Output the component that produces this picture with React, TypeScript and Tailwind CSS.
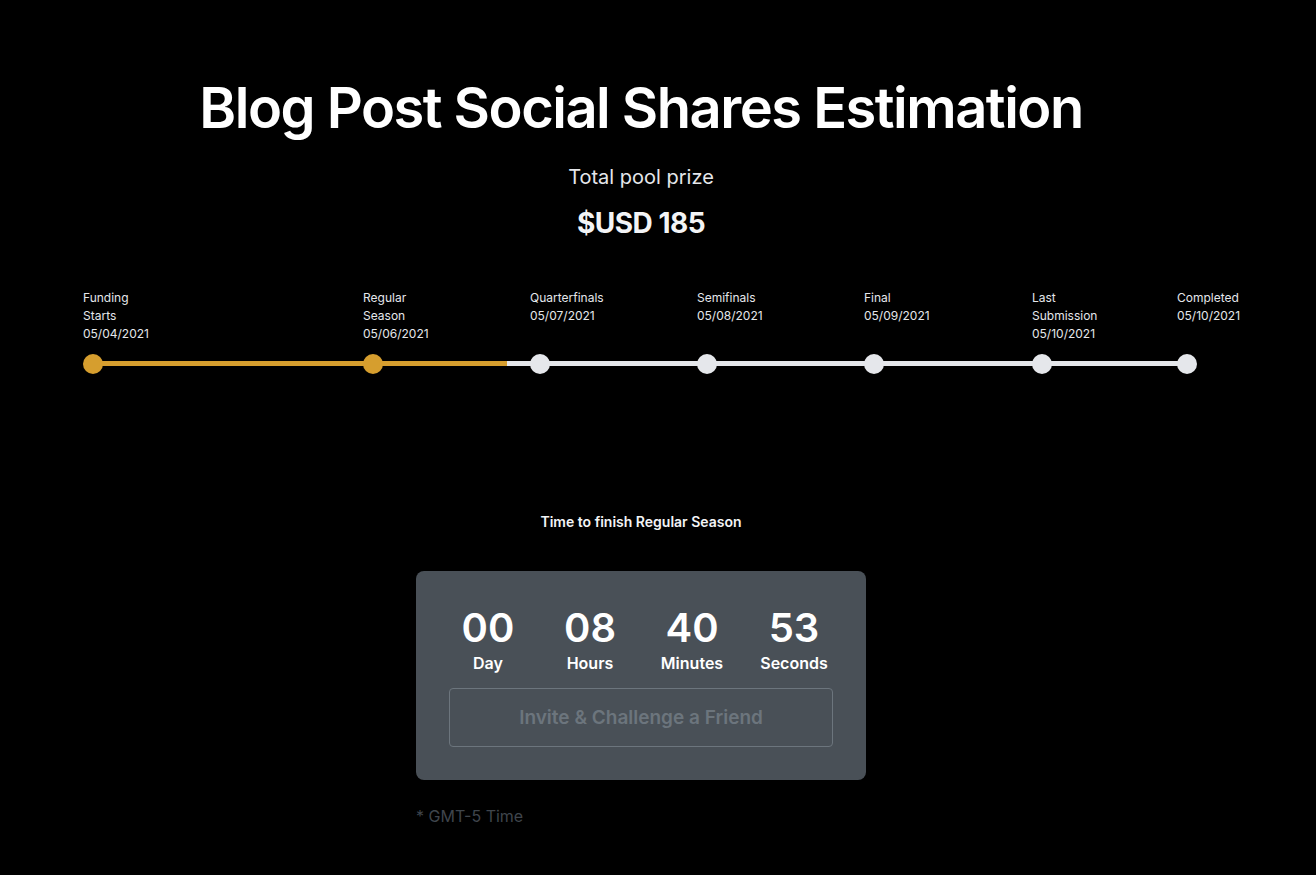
import React from "react";

const stages = [
  { label: ["Funding", "Starts"], date: "05/04/2021", w: "w-[280px]", done: true },
  { label: ["Regular", "Season"], date: "05/06/2021", w: "w-[167px]", done: true },
  { label: ["Quarterfinals"], date: "05/07/2021", w: "w-[167px]", done: false },
  { label: ["Semifinals"], date: "05/08/2021", w: "w-[167px]", done: false },
  { label: ["Final"], date: "05/09/2021", w: "w-[168px]", done: false },
  { label: ["Last", "Submission"], date: "05/10/2021", w: "w-[145px]", done: false },
  { label: ["Completed"], date: "05/10/2021", w: "w-[80px]", done: false },
];

const units = [
  { v: "00", l: "Day" },
  { v: "08", l: "Hours" },
  { v: "40", l: "Minutes" },
  { v: "53", l: "Seconds" },
];

export default function App() {
  return (
    <div
      className="min-h-[875px] w-full bg-black text-white"
      style={{ fontFamily: "Inter, 'Noto Sans', sans-serif" }}
    >
      <div className="flex w-[1282px] flex-col items-center pt-[74px]">
        <h1 className="text-[56px] leading-[68px] font-semibold tracking-[-1.5px] text-white">
          Blog Post Social Shares Estimation
        </h1>
        <p className="mt-[21px] text-[20px] leading-[28px] text-[#e5e7eb]">Total pool prize</p>
        <p className="mt-[14px] text-[28px] leading-[36px] font-bold tracking-[-0.5px] text-[#f3f4f6]">$USD 185</p>
      </div>

      <div className="mt-[48px] pl-[83px]">
        <div className="flex items-start">
          {stages.map((s, i) => (
            <div key={i} className={`${s.w} shrink-0`}>
              <div className="w-[80px] text-[12px] leading-[18px] text-[#e5e7eb]">
                {s.label.map((t, j) => (
                  <div key={j}>{t}</div>
                ))}
                <div>{s.date}</div>
              </div>
            </div>
          ))}
        </div>
        <div className="relative mt-[11px] flex h-[20px] items-center">
          <div className="absolute left-[10px] top-[7px] h-[5px] w-[1094px] bg-[#e5e7eb]" />
          <div className="absolute left-[10px] top-[7px] h-[5px] w-[414px] bg-[#d69e2e]" />
          {stages.map((s, i) => (
            <div key={i} className={`${s.w} relative shrink-0`}>
              <div
                className={
                  s.done
                    ? "h-[20px] w-[20px] rounded-full bg-[#d69e2e]"
                    : "h-[20px] w-[20px] rounded-full bg-[#e5e7eb]"
                }
              />
            </div>
          ))}
        </div>
      </div>

      <div className="mt-[138px] flex w-[1282px] flex-col items-center">
        <p className="text-[14px] leading-[20px] font-semibold text-[#f3f4f6]">Time to finish Regular Season</p>
        <div className="mt-[39px] w-[450px] rounded-[8px] bg-[#495057] px-[33px] pt-[33px] pb-[33px]">
          <div className="flex justify-center">
            {units.map((u) => (
              <div key={u.l} className="flex w-[102px] shrink-0 flex-col items-center">
                <div className="text-[40px] leading-[48px] font-semibold text-white">{u.v}</div>
                <div className="-mt-[1px] text-[16px] leading-[24px] font-semibold text-white">{u.l}</div>
              </div>
            ))}
          </div>
          <button className="mt-[13px] flex h-[59px] w-full items-center justify-center rounded-[4px] border border-[#6c757d] pt-[1px] text-[19px] font-semibold text-[#6c757d]">
            Invite &amp; Challenge a Friend
          </button>
        </div>
        <div className="mt-[24px] w-[450px] text-[16px] leading-[24px] text-[#3f454c]">* GMT-5 Time</div>
      </div>
    </div>
  );
}
